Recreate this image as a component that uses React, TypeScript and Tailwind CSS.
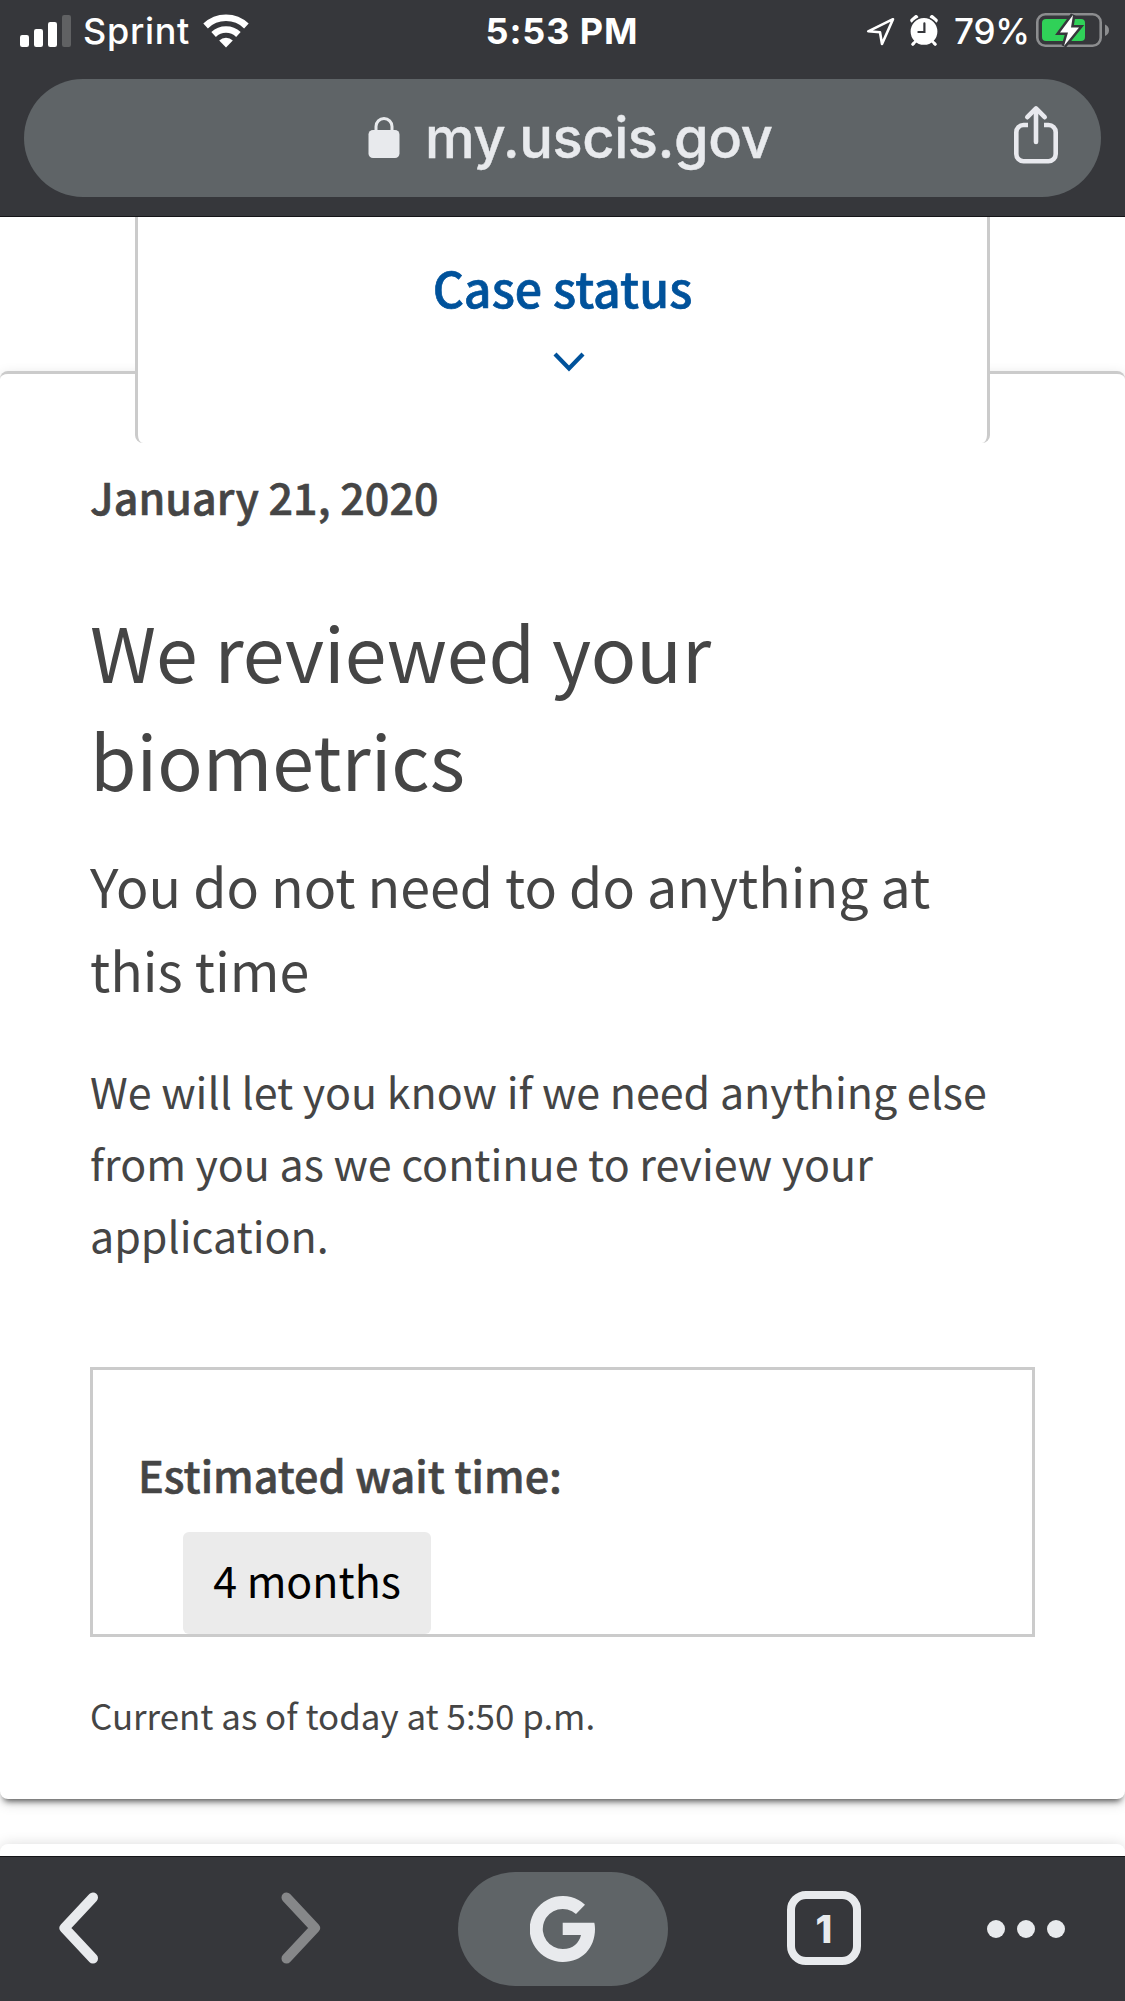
import React from 'react'

const CellSignal = () => (
  <svg className="h-[34px] w-[52px]" viewBox="0 0 52 34" fill="#fff">
    <rect x="0" y="21" width="9" height="12" rx="2.2" />
    <rect x="14" y="15" width="9" height="18" rx="2.2" />
    <rect x="28" y="8" width="9" height="25" rx="2.2" />
    <rect x="42" y="1" width="9" height="32" rx="2.2" fill="#606163" />
  </svg>
)

const Wifi = () => (
  <svg className="h-[34px] w-[46px]" viewBox="0 0 46 34" fill="none" stroke="#fff">
    <path d="M2.6 12A29.5 29.5 0 0 1 43.4 12" strokeWidth="6.6" />
    <path d="M10.6 20.5A18 18 0 0 1 35.4 20.5" strokeWidth="6.6" />
    <path d="M23 33.4L16.2 26.4A9.8 9.8 0 0 1 29.8 26.4Z" fill="#fff" stroke="none" />
  </svg>
)

const LocationArrow = () => (
  <svg className="h-[30px] w-[30px]" viewBox="0 0 30 30" fill="none" stroke="#fff" strokeWidth="2.6" strokeLinejoin="round">
    <path d="M27 3.2L2.2 15.3L14 16.2L16 28Z" />
  </svg>
)

const Alarm = () => (
  <svg className="h-[32px] w-[28px]" viewBox="0 0 28 32" fill="none" strokeLinecap="round">
    <path d="M2.6 5.4L6 2.4M25.4 5.4L22 2.4" stroke="#fff" strokeWidth="4.6" />
    <path d="M6 26L2.8 29.2M22 26L25.2 29.2" stroke="#fff" strokeWidth="2.8" />
    <circle cx="14" cy="16.4" r="14.2" fill="#fff" stroke="#36373b" strokeWidth="1.6" />
    <path d="M5.4 26.6L2.8 29.2M22.6 26.6L25.2 29.2" stroke="#fff" strokeWidth="2.8" />
    <path d="M14.4 8.4V17H8.4" stroke="#36373b" strokeWidth="2.2" />
  </svg>
)

const Battery = () => (
  <svg className="h-[38px] w-[74px]" viewBox="0 0 74 38" fill="none">
    <rect x="2.3" y="2.3" width="63.4" height="31.4" rx="8" stroke="#8c8d8f" strokeWidth="2.6" />
    <path d="M70 12.5C72.5 13.5 74 15.500 74 18.200S72.500 23 70 24Z" fill="#8c8d8f" />
    <rect x="7" y="7" width="43" height="22" rx="4" fill="#30d158" />
    <path d="M38 3L25 20.500H33L29 34L44 15.500H36Z" fill="#fff" stroke="#36373b" strokeWidth="5" paintOrder="stroke" />
  </svg>
)

const Lock = () => (
  <svg className="h-[42px] w-[32px]" viewBox="0 0 32 42" fill="none">
    <rect x="0.5" y="13" width="31" height="28" rx="4.5" fill="#e8eaed" />
    <path d="M8 14V9.5A8 8 0 0 1 24 9.5V14" stroke="#e8eaed" strokeWidth="3" />
  </svg>
)

const Share = () => (
  <svg className="h-[60px] w-[46px]" viewBox="0 0 46 60" fill="none" stroke="#e8e9ee" strokeWidth="4.6" strokeLinecap="round">
    <path d="M15 20H10.5A7.2 7.2 0 0 0 3.3 27.2V49A7.2 7.2 0 0 0 10.5 56.2H35.5A7.2 7.2 0 0 0 42.7 49V27.2A7.2 7.2 0 0 0 35.5 20H31" strokeLinecap="butt" />
    <path d="M23 37V4.5" />
    <path d="M14.3 12.2L23 3.4L31.7 12.2" strokeLinejoin="round" />
  </svg>
)

const GoogleG = () => (
  <svg className="h-[66px] w-[66px]" viewBox="0 0 66 66" fill="#e8eaed">
    <path d="M55 8.7A33 33 0 1 0 33 66C52 66 65 52 65 33C65 30.5 64.8 28.5 64.3 26.7H32.7V39H51C49 47 43 53 33 53A20 20 0 1 1 46 18Z" />
  </svg>
)

function StatusBar() {
  return (
    <div className="flex h-[62px] items-center justify-between pl-5 pr-4 text-white">
      <div className="flex w-[435px] items-center">
        <CellSignal />
        <span className="ml-[11px] w-[120px] text-[36px] font-medium leading-none tracking-[0.7px]">Sprint</span>
        <Wifi />
      </div>
      <span className="text-[36px] font-bold leading-none tracking-[0.9px]">5:53 PM</span>
      <div className="flex w-[440px] items-center justify-end">
        <LocationArrow />
        <span className="ml-[14px] flex"><Alarm /></span>
        <span className="ml-4 w-[81px] whitespace-nowrap text-[35px] font-medium leading-none tracking-[-0.2px]">79%</span>
        <Battery />
      </div>
    </div>
  )
}

function AddressBar() {
  return (
    <div className="mx-6 mt-[17px] flex h-[118px] items-center rounded-full bg-[#5f6467] pl-[344px] pr-[42px]">
      <Lock />
      <span className="ml-[25px] text-[56px] font-medium leading-none tracking-[-0.45px] text-[#e8eaed] [-webkit-text-stroke:0.4px]">my.uscis.gov</span>
      <span className="-mt-[6px] ml-auto"><Share /></span>
    </div>
  )
}

function CaseCard() {
  return (
    <>
      <div className="relative z-10 mx-[135px] flex h-[226px] flex-col items-center rounded-b-[8px] border-x-[3px] border-[#cbcbcb] bg-white pt-[34px]">
        <h1 className="text-[48.3px] font-medium leading-[72px] text-[#00529b] [-webkit-text-stroke:0.7px]">Case status</h1>
        <svg className="ml-[13px] mt-[28px] h-[22px] w-[34px]" viewBox="0 0 34 22" fill="none" stroke="#00529b" strokeWidth="4.2">
          <path d="M3 3L17 17.5L31 3" />
        </svg>
      </div>
      <div className="-mt-[72px] rounded-[8px] border-t-[3px] border-[#cbcbcb] bg-white px-[90px] pb-[55px] pt-[86px] text-[#454545] shadow-[0_6px_6px_-4px_rgba(0,0,0,0.65),0_4px_14px_rgba(0,0,0,0.14)]">
        <p className="text-[43px] font-medium leading-[72px] tracking-[0.05px] [-webkit-text-stroke:0.6px]">January 21, 2020</p>
        <h2 className="mt-[65px] text-[75.2px] leading-[108px]">We reviewed your<br />biometrics</h2>
        <h3 className="mt-[30px] whitespace-nowrap text-[53.7px] leading-[84px]">You do not need to do anything at<br />this time</h3>
        <p className="mt-[43px] whitespace-nowrap text-[42.97px] leading-[72px]">
          We will let you know if we need anything else<br />
          from you as we continue to review your<br />
          application.
        </p>
        <div className="mt-[97px] flex h-[270px] flex-col items-start border-[3px] border-[#cbcbcb] pt-[68px]">
          <p className="ml-[45px] text-[43.1px] font-medium leading-[72px] [-webkit-text-stroke:0.6px]">Estimated wait time:</p>
          <span className="ml-[90px] mt-[22px] h-[102px] w-[248px] rounded-[6px] bg-[#ebebeb] pt-[11px] text-center text-[42.9px] leading-[72px] text-black">
            4 months
          </span>
        </div>
        <p className="mt-[49px] text-[34.9px] leading-[58px]">Current as of today at 5:50 p.m.</p>
      </div>
      <div className="mt-[45px] h-10 rounded-[8px] bg-white shadow-[0_0_14px_rgba(0,0,0,0.14)]" />
    </>
  )
}

function Toolbar() {
  return (
    <nav className="flex h-[145px] items-center border-t border-[#151518] bg-[#36373b] pl-[58px] pr-[60px]">
      <svg className="-mt-[2px] h-[74px] w-[42px]" viewBox="0 0 42 74" fill="none" stroke="#e8eaed" strokeWidth="10" strokeLinecap="round" strokeLinejoin="round">
        <path d="M35 6.5L6.5 37L35 67.5" />
      </svg>
      <svg className="-mt-[2px] ml-[180px] h-[74px] w-[42px]" viewBox="0 0 42 74" fill="none" stroke="#868789" strokeWidth="10" strokeLinecap="round" strokeLinejoin="round">
        <path d="M6.5 6.5L35 37L6.5 67.5" />
      </svg>
      <div className="ml-[136px] flex h-[114px] w-[210px] items-center justify-center rounded-full bg-[#5f6467]">
        <GoogleG />
      </div>
      <div className="-mt-[2px] ml-[119px] flex h-[74px] w-[74px] items-center justify-center rounded-[19px] border-[8px] border-[#e8eaed] pt-[2px] text-[38px] font-extrabold leading-none text-[#e8eaed]">
        1
      </div>
      <div className="ml-auto flex gap-3">
        <i className="size-[18px] rounded-full bg-[#e8eaed]" />
        <i className="size-[18px] rounded-full bg-[#e8eaed]" />
        <i className="size-[18px] rounded-full bg-[#e8eaed]" />
      </div>
    </nav>
  )
}

export default function App() {
  return (
    <div className="flex h-[2001px] w-[1125px] flex-col overflow-hidden bg-white font-['Inter',sans-serif]">
      <header className="h-[217px] border-b border-[#151518] bg-[#36373b]">
        <StatusBar />
        <AddressBar />
      </header>
      <main className="h-[1639px] overflow-hidden font-['Noto_Sans_CJK_SC',sans-serif]">
        <CaseCard />
      </main>
      <Toolbar />
    </div>
  )
}
